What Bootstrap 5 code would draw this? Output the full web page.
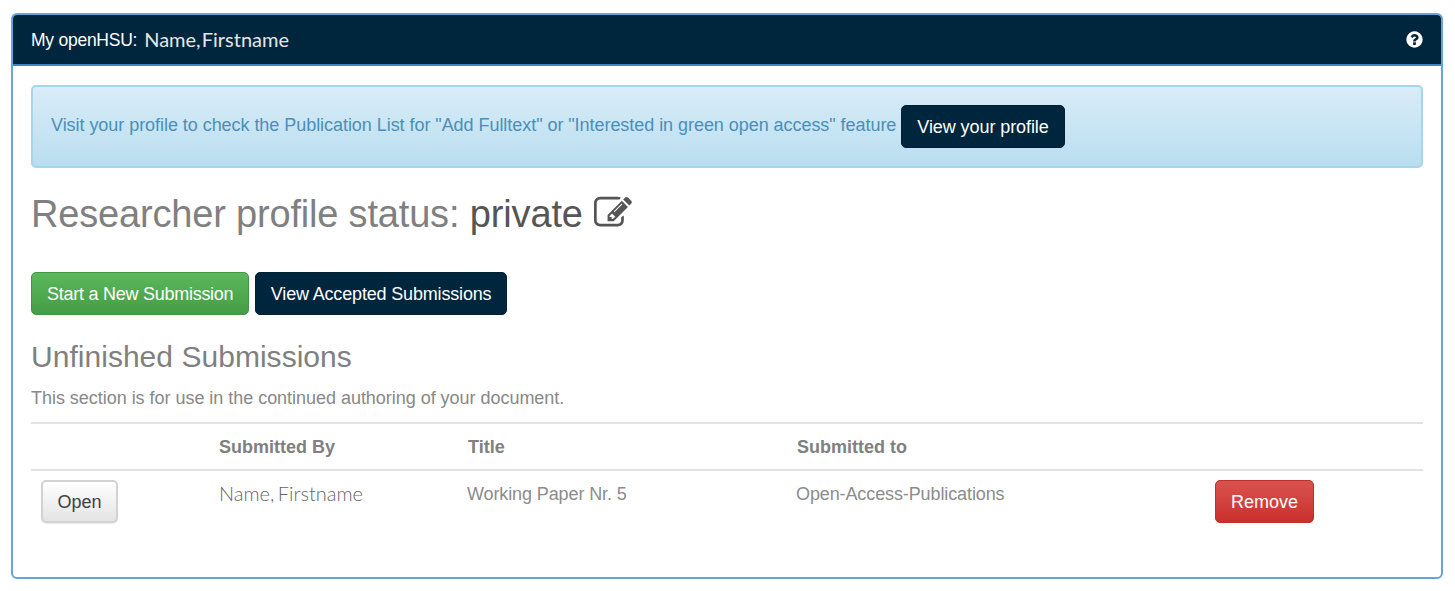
<!DOCTYPE html>
<html lang="en">
<head>
<meta charset="utf-8">
<meta name="viewport" content="width=device-width, initial-scale=1">
<title>My openHSU</title>
<link rel="stylesheet" href="https://cdn.jsdelivr.net/npm/bootstrap@5.3.0/dist/css/bootstrap.min.css">
<style>
  body { font-family: "Liberation Sans", Arial, sans-serif; font-size: 18px; line-height: 26px; color: #808080; background: #fff; }
  .panel { margin: 13px 12px 0 11px; height: 566px; border: 2px solid #65a5dc; border-radius: 6px; --bs-card-color: #808080; }
  .panel-top { background: #00263e; border-bottom: 2px solid #3d86c0; color: #fff; height: 51px; padding: 0 17px 0 18px; border-radius: 4px 4px 0 0; }
  .site { font-size: 17.5px; letter-spacing: -.25px; }
  .person { font-family: Lato, sans-serif; font-size: 20px; word-spacing: -4px; color: #e4e6e8; margin: 0 0 2px 7px; }
  .panel-main { padding: 19px 18px; }
  .notice { height: 83px; margin: 0; padding: 0 18px; border: 2px solid #a5d6ea; border-radius: 5px; background: linear-gradient(#d9ecf7, #b9def0); color: #4b8fb9; }
  .notice-text { letter-spacing: -.048px; padding-bottom: 3px; }
  .btn { --bs-btn-font-size: 18px; --bs-btn-line-height: 26px; --bs-btn-padding-x: 15px; --bs-btn-border-radius: 5px; height: 43px; padding-top: 8px; padding-bottom: 6px; white-space: nowrap; }
  .btn-navy { --bs-btn-color: #fff; --bs-btn-bg: #00263e; --bs-btn-border-color: #001f33; --bs-btn-hover-color: #fff; --bs-btn-hover-bg: #003556; }
  .btn-profile { margin-left: 5px; letter-spacing: -.08px; }
  .btn-success { --bs-btn-border-color: #419641; background: linear-gradient(#5cb85c, #449d44); letter-spacing: -.26px; }
  .btn-accepted { letter-spacing: -.17px; }
  .btn-danger { --bs-btn-border-color: #c12e2a; background: linear-gradient(#d9534f, #c9302c); padding-top: 7px; }
  .btn-plain { --bs-btn-color: #404040; border: 2px solid #d2d2d2; padding: 6px 14.5px; background: linear-gradient(#fff, #e4e4e4); box-shadow: 0 1px 1px rgba(0,0,0,.08); }
  h1 { font-size: 38px; line-height: 44px; font-weight: 400; color: #808080; margin: 24px 0 0; letter-spacing: -.18px; }
  h1 strong { font-weight: 400; color: #555; letter-spacing: -.15px; margin-left: 10.5px; }
  h1 svg { margin: 0 0 2px 11px; }
  h2 { font-size: 30px; line-height: 36px; font-weight: 400; color: #808080; margin: 24px 0 0; letter-spacing: .03px; }
  .actions { margin-top: 36px; gap: 5.5px; }
  .intro { margin: 10px 0 0; letter-spacing: -.03px; color: #888; }
  .submissions { table-layout: fixed; margin: 11px 0 0; --bs-table-color: #808080; --bs-table-bg: transparent; border-top: 2px solid #e3e3e3; }
  .submissions th, .submissions td { padding: 10px; border: 0; vertical-align: top; color: #808080; }
  .submissions th { height: 45px; padding-bottom: 9px; }
  .submissions th:nth-child(n+3) { padding-left: 11px; }
  .submissions td { color: #8c8c8c; letter-spacing: -.11px; }
  .submissions .btn { letter-spacing: 0; margin-top: -1px; }
  .submissions tbody { border-top: 2px solid #e3e3e3; }
  .submissions td.cell-person { font-family: Lato, sans-serif; font-weight: 300; font-size: 20px; letter-spacing: 0; word-spacing: -2px; color: #666; padding-top: 9px; }
</style>
</head>
<body>
<main class="card panel">
  <header class="panel-top d-flex align-items-center">
    <span class="site">My openHSU:</span><span class="person">Name, Firstname</span>
    <svg class="ms-auto" width="19" height="19" viewBox="0 0 1792 1792" fill="#fff" role="img" aria-label="Help"><path d="M1024 1376v-192q0-14-9-23t-23-9h-192q-14 0-23 9t-9 23v192q0 14 9 23t23 9h192q14 0 23-9t9-23zm256-672q0-88-55.5-163t-138.5-116-170-41q-243 0-371 213-15 24 8 42l132 100q7 6 19 6 16 0 25-12 53-68 86-92 34-24 86-24 48 0 85.5 26t37.5 59q0 38-20 61t-68 45q-63 28-115.5 86.5t-52.5 125.5v36q0 14 9 23t23 9h192q14 0 23-9t9-23q0-19 21.5-49.5t54.5-49.5q32-18 49-28.5t46-35 44.5-48 28-60.5 12.5-81zm384 192q0 209-103 385.5t-279.5 279.5-385.5 103-385.5-103-279.5-279.5-103-385.5 103-385.5 279.5-279.5 385.5-103 385.5 103 279.5 279.5 103 385.5z"/></svg>
  </header>
  <div class="panel-main">
    <div class="alert notice d-flex align-items-center">
      <span class="notice-text">Visit your profile to check the Publication List for "Add Fulltext" or "Interested in green open access" feature</span>
      <a class="btn btn-navy btn-profile flex-shrink-0" href="#">View your profile</a>
    </div>
    <h1 class="d-flex align-items-center"><span>Researcher profile status:</span><strong>private</strong>
      <svg width="38" height="38" viewBox="0 0 1792 1792" fill="#555" role="img" aria-label="Edit"><path d="M888 1184l116-116-152-152-116 116v56h96v96h56zm440-720q-16-16-33 1l-350 350q-17 17-1 33t33-1l350-350q17-17 1-33zm80 594v190q0 119-84.5 203.5t-203.5 84.5h-832q-119 0-203.5-84.5t-84.5-203.5v-832q0-119 84.5-203.5t203.5-84.5h832q63 0 117 25 15 7 18 23 3 17-9 29l-49 49q-14 14-32 8-23-6-45-6h-832q-66 0-113 47t-47 113v832q0 66 47 113t113 47h832q66 0 113-47t47-113v-126q0-13 9-22l64-64q15-15 35-7t20 29zm-96-738l288 288-672 672h-288v-288zm444 132l-92 92-288-288 92-92q28-28 68-28t68 28l152 152q28 28 28 68t-28 68z"/></svg>
    </h1>
    <div class="actions d-flex">
      <a class="btn btn-success" href="#">Start a New Submission</a>
      <a class="btn btn-navy btn-accepted" href="#">View Accepted Submissions</a>
    </div>
    <h2>Unfinished Submissions</h2>
    <p class="intro">This section is for use in the continued authoring of your document.</p>
    <table class="table submissions">
      <colgroup><col style="width:178px"><col style="width:248px"><col style="width:329px"><col style="width:419px"><col></colgroup>
      <thead><tr><th></th><th>Submitted By</th><th>Title</th><th>Submitted to</th><th></th></tr></thead>
      <tbody><tr>
        <td><button class="btn btn-plain" type="button">Open</button></td>
        <td class="cell-person">Name, Firstname</td>
        <td>Working Paper Nr. 5</td>
        <td>Open-Access-Publications</td>
        <td><button class="btn btn-danger" type="button">Remove</button></td>
      </tr></tbody>
    </table>
  </div>
</main>
<script src="https://cdn.jsdelivr.net/npm/bootstrap@5.3.0/dist/js/bootstrap.bundle.min.js"></script>
</body>
</html>
